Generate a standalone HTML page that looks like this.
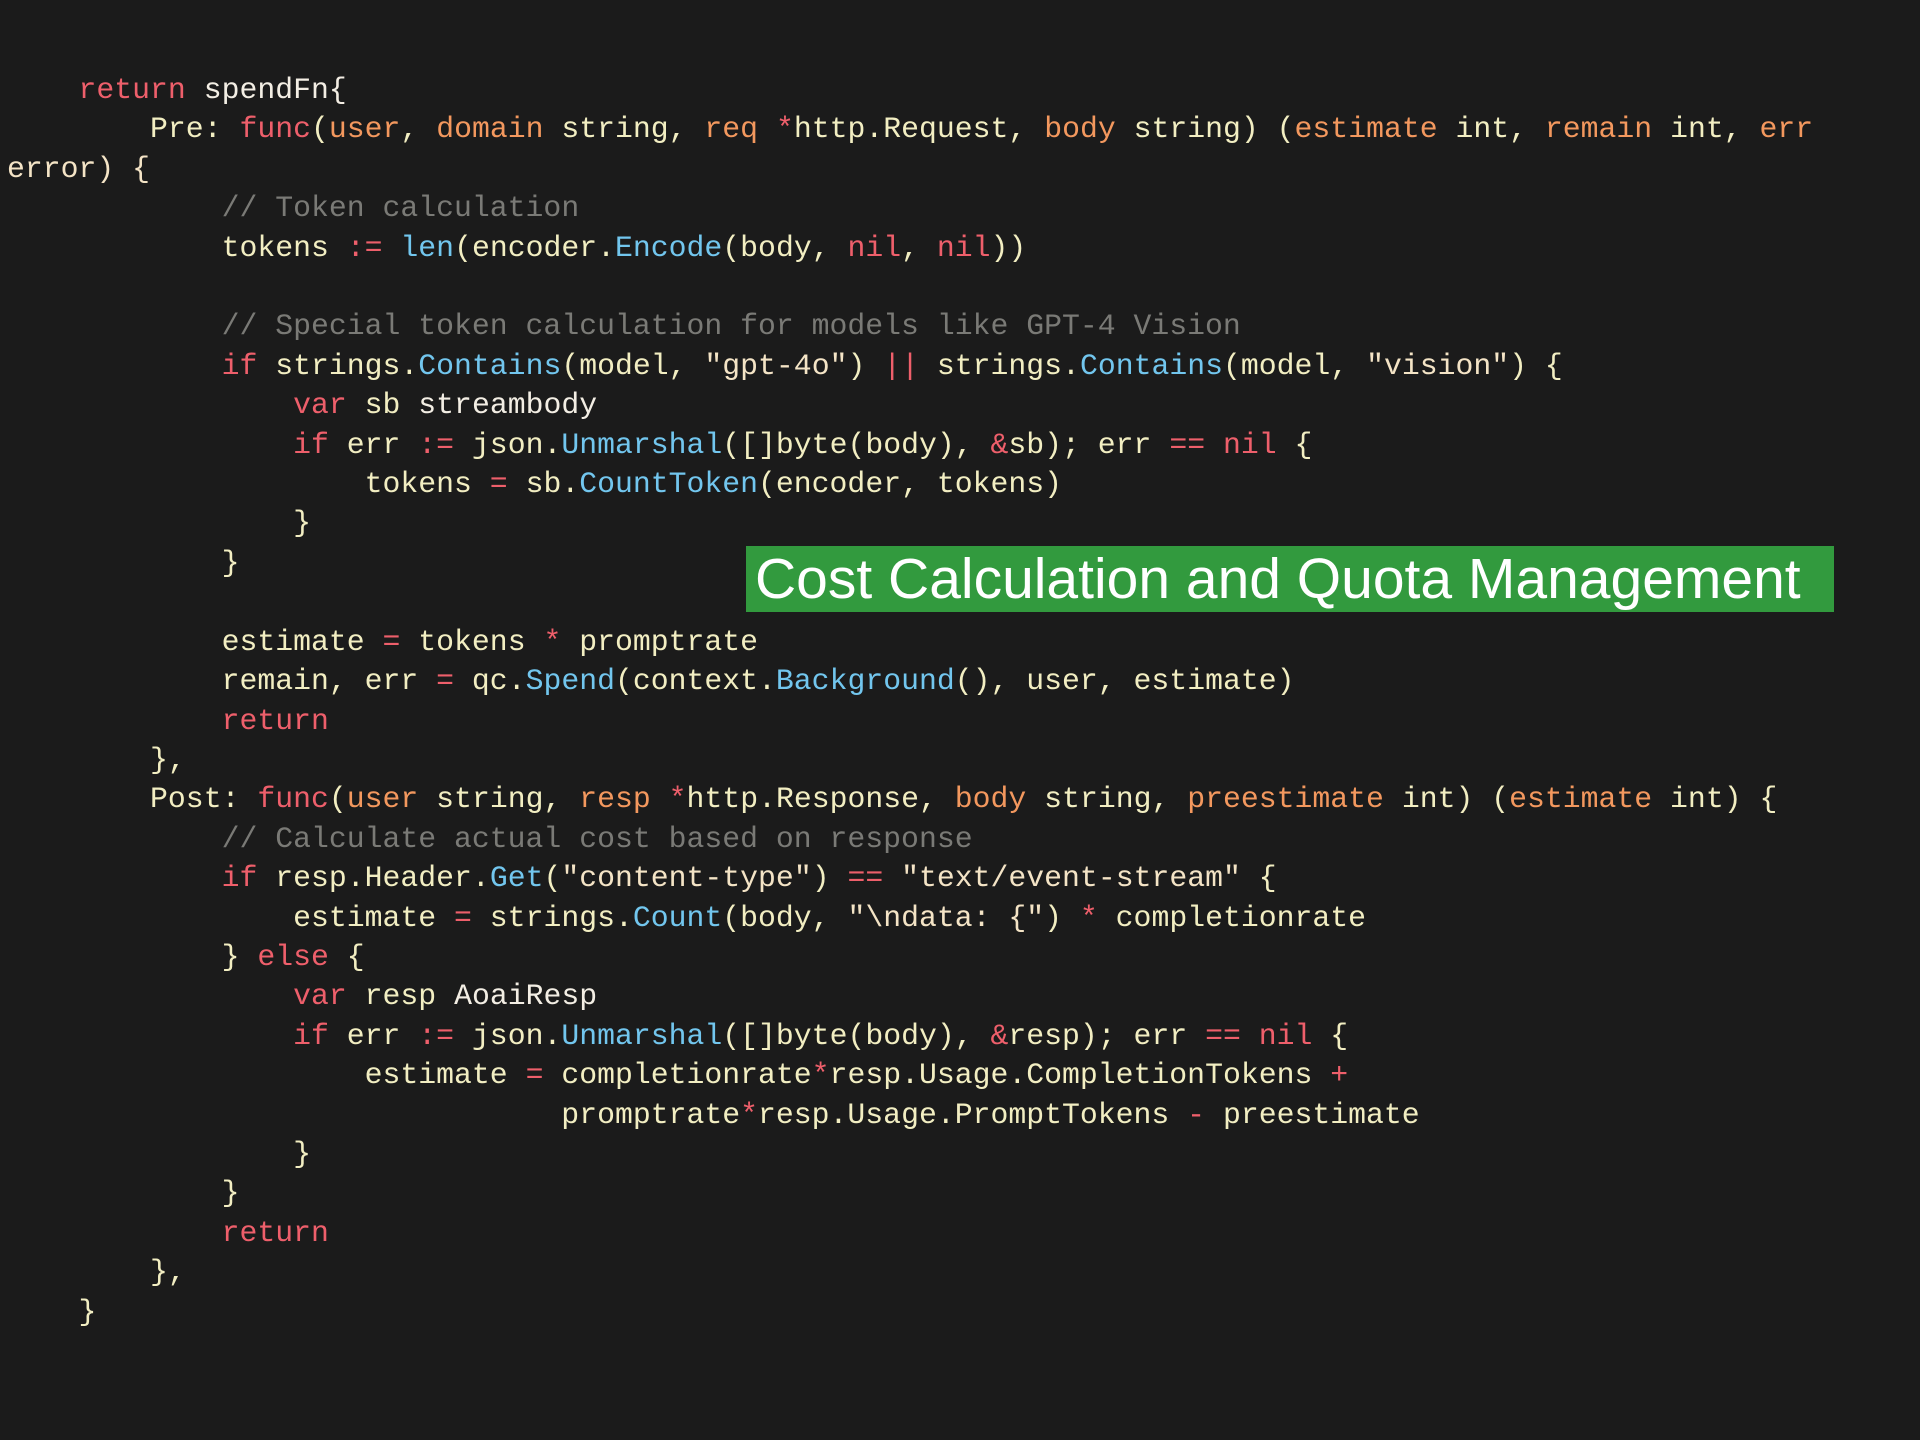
<!DOCTYPE html>
<html><head><meta charset="utf-8"><style>
html,body{margin:0;padding:0;background:#1b1b1b;width:1920px;height:1440px;overflow:hidden}
pre{position:absolute;left:7px;top:71px;margin:0;font-family:"Liberation Mono","DejaVu Sans Mono",monospace;font-size:29.8px;line-height:39.4px;color:#f2eec2;white-space:pre}
.k{color:#ee5f6b}.p{color:#f3985e}.f{color:#72c6ee}.c{color:#7a7a76}.w{color:#f3eee4}.s{color:#f4e4c6}
.box{position:absolute;left:746px;top:546px;width:1088px;height:66px;background:#329a3e}
.box span{position:absolute;left:9px;top:1px;font-family:"Liberation Sans",Arial,sans-serif;font-size:57px;line-height:64px;color:#fff;white-space:nowrap}
</style></head><body>
<pre>    <span class="k">return</span> <span class="w">spendFn{</span>
        Pre: <span class="k">func</span>(<span class="p">user</span>, <span class="p">domain</span> string, <span class="p">req</span> <span class="k">*</span>http.Request, <span class="p">body</span> string) (<span class="p">estimate</span> int, <span class="p">remain</span> int, <span class="p">err</span>
<span class="s">error) {</span>
            <span class="c">// Token calculation</span>
            tokens <span class="k">:=</span> <span class="f">len</span>(encoder.<span class="f">Encode</span>(body, <span class="k">nil</span>, <span class="k">nil</span>))

            <span class="c">// Special token calculation for models like GPT-4 Vision</span>
            <span class="k">if</span> strings.<span class="f">Contains</span>(model, <span class="s">"gpt-4o"</span>) <span class="k">||</span> strings.<span class="f">Contains</span>(model, <span class="s">"vision"</span>) {
                <span class="k">var</span> sb <span class="w">streambody</span>
                <span class="k">if</span> err <span class="k">:=</span> json.<span class="f">Unmarshal</span>([]byte(body), <span class="k">&amp;</span>sb); err <span class="k">==</span> <span class="k">nil</span> {
                    tokens <span class="k">=</span> sb.<span class="f">CountToken</span>(encoder, tokens)
                }
            }

            estimate <span class="k">=</span> tokens <span class="k">*</span> promptrate
            remain, err <span class="k">=</span> qc.<span class="f">Spend</span>(context.<span class="f">Background</span>(), user, estimate)
            <span class="k">return</span>
        },
        Post: <span class="k">func</span>(<span class="p">user</span> string, <span class="p">resp</span> <span class="k">*</span>http.Response, <span class="p">body</span> string, <span class="p">preestimate</span> int) (<span class="p">estimate</span> int) {
            <span class="c">// Calculate actual cost based on response</span>
            <span class="k">if</span> resp.Header.<span class="f">Get</span>(<span class="s">"content-type"</span>) <span class="k">==</span> <span class="s">"text/event-stream"</span> {
                estimate <span class="k">=</span> strings.<span class="f">Count</span>(body, <span class="s">"\ndata: {"</span>) <span class="k">*</span> completionrate
            } <span class="k">else</span> {
                <span class="k">var</span> resp <span class="w">AoaiResp</span>
                <span class="k">if</span> err <span class="k">:=</span> json.<span class="f">Unmarshal</span>([]byte(body), <span class="k">&amp;</span>resp); err <span class="k">==</span> <span class="k">nil</span> {
                    estimate <span class="k">=</span> completionrate<span class="k">*</span>resp.Usage.CompletionTokens <span class="k">+</span>
                               promptrate<span class="k">*</span>resp.Usage.PromptTokens <span class="k">-</span> preestimate
                }
            }
            <span class="k">return</span>
        },
    }</pre>
<div class="box"><span>Cost Calculation and Quota Management</span></div>
</body></html>
